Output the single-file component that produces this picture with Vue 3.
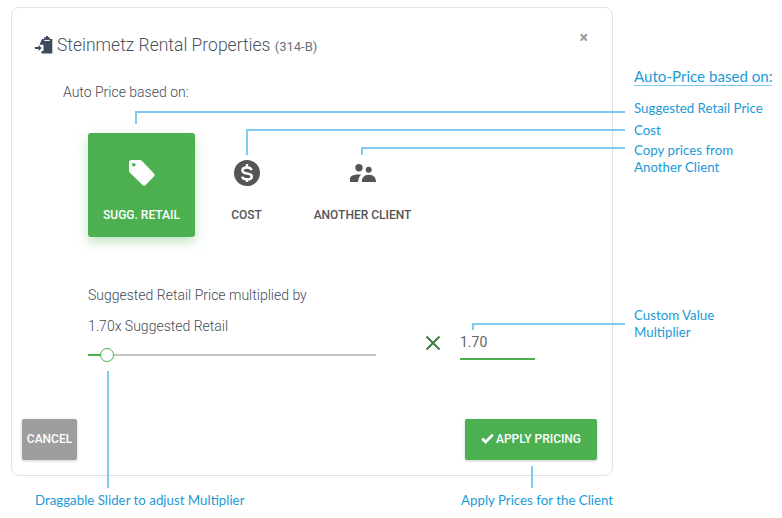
<script setup>
// Pricing dialog with the documentation callouts drawn over it.
const OPTIONS = [
  { id: 'retail', label: 'SUGG. RETAIL', active: true },
  { id: 'cost', label: 'COST' },
  { id: 'client', label: 'ANOTHER CLIENT' },
]
const LEADERS = [
  '136,124 136,112 625,112',
  '247,155 247,130 625,130',
  '362,155 362,148 625,148',
  '473,330 473,324 625,324',
  '108,371 108,488',
  '532,466 532,488',
]
const NOTES = [
  { text: 'Suggested Retail Price', x: 634, y: 100 },
  { text: 'Cost', x: 634, y: 122 },
  { text: 'Copy prices from\nAnother Client', x: 634, y: 142 },
  { text: 'Custom Value\nMultiplier', x: 634, y: 307 },
  { text: 'Draggable Slider to adjust Multiplier', x: 35, y: 492 },
  { text: 'Apply Prices for the Client', x: 461, y: 492 },
]
</script>

<template>
  <div class="page">
    <section class="modal">
      <header class="head">
        <svg class="head-icon" viewBox="0 0 18 18" width="18" height="18">
          <path fill="#3d4a5c" d="M7 3h2.200V1.200H11V0h2v1.200h1.800V3h2.500V17.500H6.500V15H8.500V8.800H4.500z" />
          <rect x="9.200" y="3.900" width="5.600" height="1" fill="#fff" />
          <path fill="#3d4a5c" d="M0 11h3.500V8.900l3.200 3.100-3.200 3.100V13H0z" />
        </svg>
        <h1 class="title">Steinmetz Rental Properties <small>(314-B)</small></h1>
        <span class="close">×</span>
      </header>

      <p class="based">Auto Price based on:</p>

      <div class="options">
        <div v-for="o in OPTIONS" :key="o.id" class="opt" :class="['opt-' + o.id, { active: o.active }]">
          <svg v-if="o.id === 'retail'" viewBox="0 0 28 28" width="28" height="28">
            <path fill="#fff" d="M1 3.200C1 2 2 1 3.200 1h8.800c.8 0 1.500.3 2 .9l12 12.700c.8.9.8 2.200 0 3l-8.400 8.400c-.9.9-2.200.8-3 0L1.900 13.700C1.300 13.100 1 12.400 1 11.700z" />
            <circle cx="5.800" cy="5.800" r="1.800" fill="#4caf50" />
          </svg>
          <svg v-else-if="o.id === 'cost'" viewBox="0 0 26 26" width="26" height="26">
            <circle cx="13" cy="13" r="13" fill="#555" />
            <path fill="none" stroke="#fff" stroke-width="2.500" d="M17.700 10c-.6-1.700-2.300-2.600-4.700-2.600-2.800 0-4.600 1.200-4.600 3 0 4.400 9.400 1.800 9.400 6 0 1.900-2 3-4.800 3-2.600 0-4.400-1-5-2.700" />
            <path stroke="#fff" stroke-width="2.400" d="M13 4v4M13 18v4" />
          </svg>
          <svg v-else viewBox="0 0 26 18" width="26" height="18">
            <circle cx="9" cy="3.700" r="3.700" fill="#555" />
            <circle cx="18.700" cy="5.700" r="3" fill="#555" />
            <path fill="#555" d="M0 18v-3.500c0-2.400 3.600-4 8.500-4 1 0 1.900.1 2.700.2C9.200 12.300 8.300 14.600 8 18z" />
            <path fill="#555" d="M11.800 18c0-3.800 2-7.200 7-7.200 5 0 7.200 3.200 7.200 7.200z" />
          </svg>
          <span class="opt-label">{{ o.label }}</span>
        </div>
      </div>

      <div class="multiplier">
        <div class="slider-col">
          <p class="mult-line">Suggested Retail Price multiplied by</p>
          <p class="mult-line value-line">1.70x Suggested Retail</p>
          <div class="slider">
            <span class="slider-fill"></span>
            <span class="slider-thumb"></span>
          </div>
        </div>
        <svg class="times" viewBox="0 0 16 16" width="16" height="16">
          <path stroke="#3f7d43" stroke-width="2" d="M1.500 1.500l13 13M14.500 1.500l-13 13" />
        </svg>
        <div class="custom">1.70</div>
      </div>

      <footer class="actions">
        <button class="btn btn-cancel">CANCEL</button>
        <button class="btn btn-apply">
          <svg viewBox="0 0 14 12" width="13" height="11">
            <path fill="none" stroke="#fff" stroke-width="3" d="M1.200 6l3.800 3.800L12.800 1.800" />
          </svg>
          APPLY PRICING
        </button>
      </footer>
    </section>

    <!-- documentation callouts -->
    <svg class="leaders" viewBox="0 0 782 518" width="782" height="518">
      <polyline v-for="p in LEADERS" :key="p" :points="p" fill="none" stroke="#7fcbef" stroke-width="2" />
    </svg>
    <h2 class="note-title">Auto-Price based on:</h2>
    <div v-for="n in NOTES" :key="n.text" class="note" :style="{ left: n.x + 'px', top: n.y + 'px' }">{{ n.text }}</div>
  </div>
</template>

<style scoped>
.page {
  position: relative;
  width: 782px;
  height: 518px;
  overflow: hidden;
  background: #fff;
  font-family: Roboto, "Liberation Sans", sans-serif;
  padding: 7px 0 0 11px;
  box-sizing: border-box;
}
.modal {
  width: 602px;
  height: 469px;
  box-sizing: border-box;
  border: 1px solid #e2e2e2;
  border-radius: 8px;
  display: flex;
  flex-direction: column;
  padding: 0 15px 15px 10px;
}
.head {
  display: flex;
  align-items: center;
  height: 28px;
  margin-top: 23px;
  padding-left: 13px;
}
.head-icon { margin-right: 4px; }
.title {
  margin: 0;
  flex: 1;
  font-size: 17.500px;
  font-weight: 300;
  color: #4a5260;
}
.title small { font-size: 13px; font-weight: 400; color: #6b7079; }
.close {
  font-size: 16px;
  font-weight: 700;
  color: #999;
  margin: -16px 9px 0 0;
}
.based {
  margin: 23px 0 0 41px;
  font-size: 14px;
  font-weight: 300;
  line-height: 20px;
  color: #444b57;
}
.options {
  display: flex;
  margin: 31px 0 0 66px;
  height: 104px;
}
.opt {
  display: flex;
  flex-direction: column;
  align-items: center;
  height: 104px;
  color: #555;
  position: relative;
}
.opt svg { position: absolute; top: 27px; }
.opt-retail { width: 107px; }
.opt-cost { width: 103px; }
.opt-client { width: 129px; }
.opt-client svg { top: 31px; }
.opt-retail svg { top: 26px; }
.opt.active {
  background: #4caf50;
  color: #fff;
  border-radius: 3px;
  box-shadow: 0 5px 12px rgba(76, 175, 80, 0.35);
}
.opt-label {
  margin-top: 75px;
  font-size: 12px;
  font-weight: 500;
  line-height: 14px;
  white-space: nowrap;
}
.multiplier {
  display: flex;
  align-items: flex-start;
  margin: 48px 0 0 66px;
}
.slider-col { width: 288px; }
.mult-line {
  margin: 0;
  font-size: 14px;
  font-weight: 300;
  line-height: 20px;
  color: #444b57;
}
.value-line { margin-top: 11px; }
.slider {
  position: relative;
  height: 2px;
  margin-top: 18px;
  background: #c4c4c4;
}
.slider-fill {
  position: absolute;
  left: 0;
  top: 0;
  width: 14px;
  height: 2px;
  background: #4caf50;
}
.slider-thumb {
  position: absolute;
  left: 12px;
  top: -6px;
  width: 14px;
  height: 14px;
  box-sizing: border-box;
  border: 1px solid #4caf50;
  border-radius: 50%;
  background: #fff;
}
.times { margin: 50px 0 0 49px; }
.custom {
  width: 75px;
  height: 37px;
  margin: 38px 0 0 19px;
  padding-top: 8px;
  box-sizing: border-box;
  border-bottom: 2px solid #4caf50;
  font-size: 14px;
  line-height: 22px;
  color: #666;
}
.actions {
  display: flex;
  justify-content: space-between;
  margin-top: auto;
}
.btn {
  height: 41px;
  padding: 0 0 2px;
  border: 0;
  border-radius: 2px;
  color: #fff;
  font-family: inherit;
  font-size: 12px;
  font-weight: 500;
  box-shadow: 0 1px 3px rgba(0, 0, 0, 0.2);
}
.btn-cancel { width: 55px; background: #9e9e9e; }
.btn-apply {
  width: 132px;
  background: #4caf50;
  display: flex;
  align-items: center;
  justify-content: center;
  gap: 2px;
}
.leaders { position: absolute; left: 0; top: 0; pointer-events: none; }
.note-title {
  position: absolute;
  left: 634px;
  top: 68px;
  margin: 0;
  font-family: Lato, sans-serif;
  font-size: 15.100px;
  font-weight: 400;
  line-height: 17px;
  color: #1b9ad8;
  border-bottom: 1px solid #7fcbef;
  white-space: nowrap;
}
.note {
  position: absolute;
  font-family: Lato, sans-serif;
  font-size: 13.300px;
  line-height: 17px;
  color: #1b9ad8;
  white-space: pre-line;
}
</style>
